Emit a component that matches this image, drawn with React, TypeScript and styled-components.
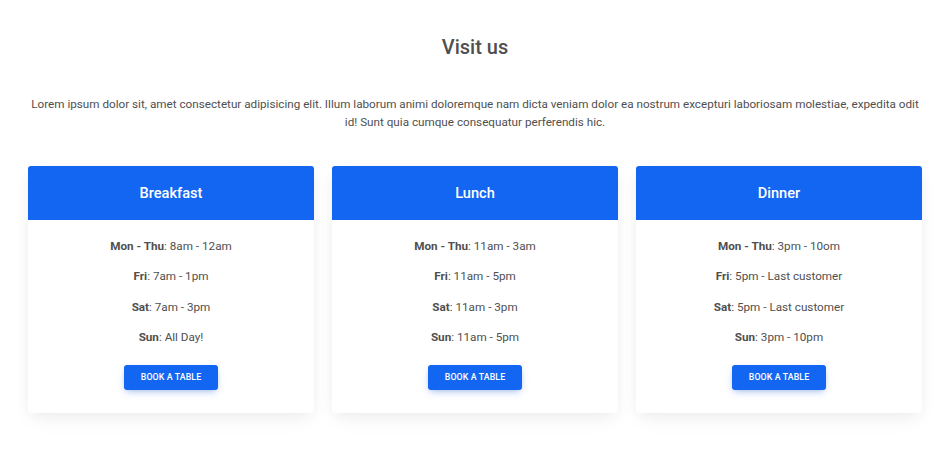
import React from "react";
import styled, { createGlobalStyle } from "styled-components";

const Global = createGlobalStyle`
  html, body { margin: 0; padding: 0; background: #ffffff; }
  body { font-family: Roboto, "Noto Sans", sans-serif; color: #4f4f4f; }
`;

const Section = styled.section`
  display: flex;
  flex-direction: column;
  align-items: center;
  padding: 33px 28px 40px;
`;

const Title = styled.h3`
  margin: 0;
  font-size: 20px;
  line-height: 28px;
  font-weight: 500;
  color: #4f4f4f;
  text-align: center;
`;

const Lead = styled.p`
  margin: 34px 0 0;
  font-size: 11.7px;
  line-height: 18px;
  color: #4f4f4f;
  text-align: center;
  max-width: 894px;
`;

const Grid = styled.div`
  margin-top: 35px;
  width: 100%;
  display: grid;
  grid-template-columns: repeat(3, 1fr);
  gap: 18px;
`;

const Card = styled.div`
  display: flex;
  flex-direction: column;
  background: #fff;
  border-radius: 4px;
  box-shadow: 0 2px 15px -3px rgba(0, 0, 0, 0.07), 0 10px 20px -2px rgba(0, 0, 0, 0.04);
`;

const Header = styled.div`
  height: 54px;
  display: flex;
  align-items: center;
  justify-content: center;
  background: #1266f1;
  border-radius: 3px 3px 0 0;
  color: #fff;
  font-size: 14.6px;
  font-weight: 500;
`;

const Body = styled.div`
  display: flex;
  flex-direction: column;
  align-items: center;
  padding: 17px 18px 23px;
`;

const Line = styled.p`
  margin: 0 0 12.3px;
  font-size: 11.7px;
  line-height: 18px;
  color: #4f4f4f;
  b { font-weight: 700; }
`;

const Button = styled.button`
  margin-top: 6.5px;
  width: 94px;
  height: 25px;
  border: 0;
  border-radius: 3px;
  background: #1266f1;
  color: #fff;
  font-family: Roboto, sans-serif;
  font-size: 8.8px;
  font-weight: 500;
  text-transform: uppercase;
  letter-spacing: 0.1px;
  box-shadow: 0 3px 8px -2px rgba(18, 102, 241, 0.35), 0 2px 5px -2px rgba(0, 0, 0, 0.15);
  cursor: pointer;
`;

const menus = [
  {
    name: "Breakfast",
    rows: [
      ["Mon - Thu", "8am - 12am"],
      ["Fri", "7am - 1pm"],
      ["Sat", "7am - 3pm"],
      ["Sun", "All Day!"],
    ],
  },
  {
    name: "Lunch",
    rows: [
      ["Mon - Thu", "11am - 3am"],
      ["Fri", "11am - 5pm"],
      ["Sat", "11am - 3pm"],
      ["Sun", "11am - 5pm"],
    ],
  },
  {
    name: "Dinner",
    rows: [
      ["Mon - Thu", "3pm - 10om"],
      ["Fri", "5pm - Last customer"],
      ["Sat", "5pm - Last customer"],
      ["Sun", "3pm - 10pm"],
    ],
  },
];

export default function App() {
  return (
    <>
      <Global />
      <Section>
        <Title>Visit us</Title>
        <Lead>
          Lorem ipsum dolor sit, amet consectetur adipisicing elit. Illum laborum animi doloremque nam dicta veniam dolor ea nostrum excepturi laboriosam molestiae, expedita odit id! Sunt quia cumque consequatur perferendis hic.
        </Lead>
        <Grid>
          {menus.map((m) => (
            <Card key={m.name}>
              <Header>{m.name}</Header>
              <Body>
                {m.rows.map(([d, t]) => (
                  <Line key={d}>
                    <b>{d}</b>: {t}
                  </Line>
                ))}
                <Button>Book a table</Button>
              </Body>
            </Card>
          ))}
        </Grid>
      </Section>
    </>
  );
}
